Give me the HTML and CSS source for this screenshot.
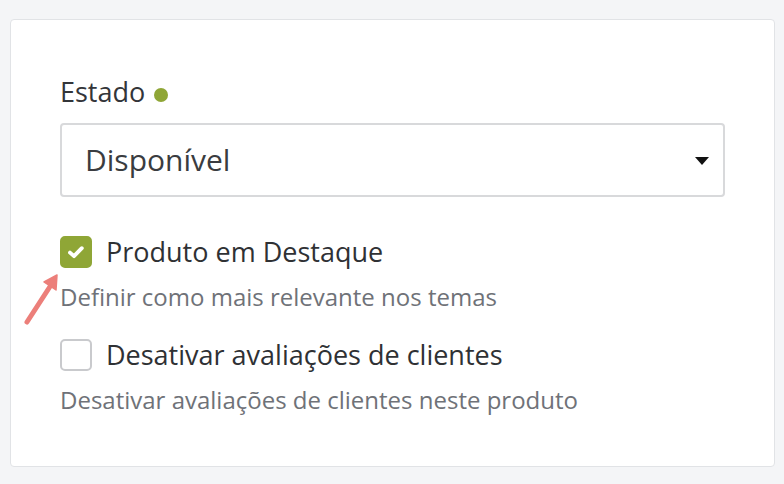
FILE: index.html
```html
<!DOCTYPE html>
<html lang="pt">
<head>
<meta charset="utf-8">
<link rel="stylesheet" href="styles.css">
</head>
<body>
<div class="card">
  <div class="field">
    <div class="label">Estado <span class="dot"></span></div>
    <div class="select">
      <span class="select-value">Disponível</span>
      <span class="caret"></span>
    </div>
  </div>
  <div class="option">
    <div class="check-row">
      <span class="box checked">
        <svg viewBox="0 0 32 32" width="32" height="32"><path d="M10 16.6 L14 20.2 L21.8 12.2" fill="none" stroke="#fff" stroke-width="3.8" stroke-linecap="round" stroke-linejoin="round"/></svg>
      </span>
      <span class="check-label">Produto em Destaque</span>
    </div>
    <div class="desc">Definir como mais relevante nos temas</div>
  </div>
  <div class="option">
    <div class="check-row">
      <span class="box"></span>
      <span class="check-label">Desativar avaliações de clientes</span>
    </div>
    <div class="desc">Desativar avaliações de clientes neste produto</div>
  </div>
  <svg class="arrow" width="45" height="60" viewBox="0 0 45 60">
    <path d="M7 52 L31 15" stroke="#ec7f7a" stroke-width="5" stroke-linecap="round" fill="none"/>
    <path d="M37 5 L24 12 L36 20 Z" fill="#ec7f7a" stroke="#ec7f7a" stroke-width="1.5" stroke-linejoin="round"/>
  </svg>
</div>
</body>
</html>
```

FILE: styles.css
```css
* { box-sizing: border-box; }
html, body { margin: 0; padding: 0; }
body {
  background: #f4f5f7;
  font-family: "Open Sans", "Liberation Sans", sans-serif;
  color: #333539;
  width: 784px;
  height: 484px;
  overflow: hidden;
  padding: 19px 9px 0 10px;
}
.card {
  position: relative;
  background: #fff;
  border: 1px solid #e1e3e6;
  border-radius: 4px;
  height: 448px;
  padding: 56px 49px 0 49px;
}
.label {
  font-size: 27px;
  line-height: 32px;
  display: flex;
  align-items: center;
  gap: 9px;
}
.dot {
  width: 14px;
  height: 14px;
  border-radius: 50%;
  background: #8fa636;
  margin-top: 5px;
}
.select {
  margin-top: 15px;
  height: 74px;
  border: 2px solid #d8d9db;
  border-radius: 4px;
  display: flex;
  align-items: center;
  justify-content: space-between;
  padding: 0 14px 0 23px;
}
.select-value {
  font-size: 30px;
  line-height: 36px;
  color: #3a3c40;
}
.caret {
  width: 0; height: 0;
  border-left: 7px solid transparent;
  border-right: 7px solid transparent;
  border-top: 8px solid #111;
  margin-top: 2px;
}
.option { margin-top: 39px; }
.option + .option { margin-top: 28px; }
.check-row {
  display: flex;
  align-items: center;
  gap: 14px;
}
.box {
  width: 32px;
  height: 32px;
  border: 2px solid #c9cacd;
  border-radius: 5px;
  display: block;
  background: #fff;
}
.box.checked {
  background: #8fa636;
  border-color: #8fa636;
}
.box.checked svg { display: block; margin: -2px; }
.check-label {
  font-size: 27px;
  line-height: 32px;
  color: #2f3134;
}
.desc {
  margin-top: 15px;
  font-size: 24px;
  line-height: 28px;
  color: #6f7278;
}
.arrow {
  position: absolute;
  left: 9px;
  top: 250px;
}
```
